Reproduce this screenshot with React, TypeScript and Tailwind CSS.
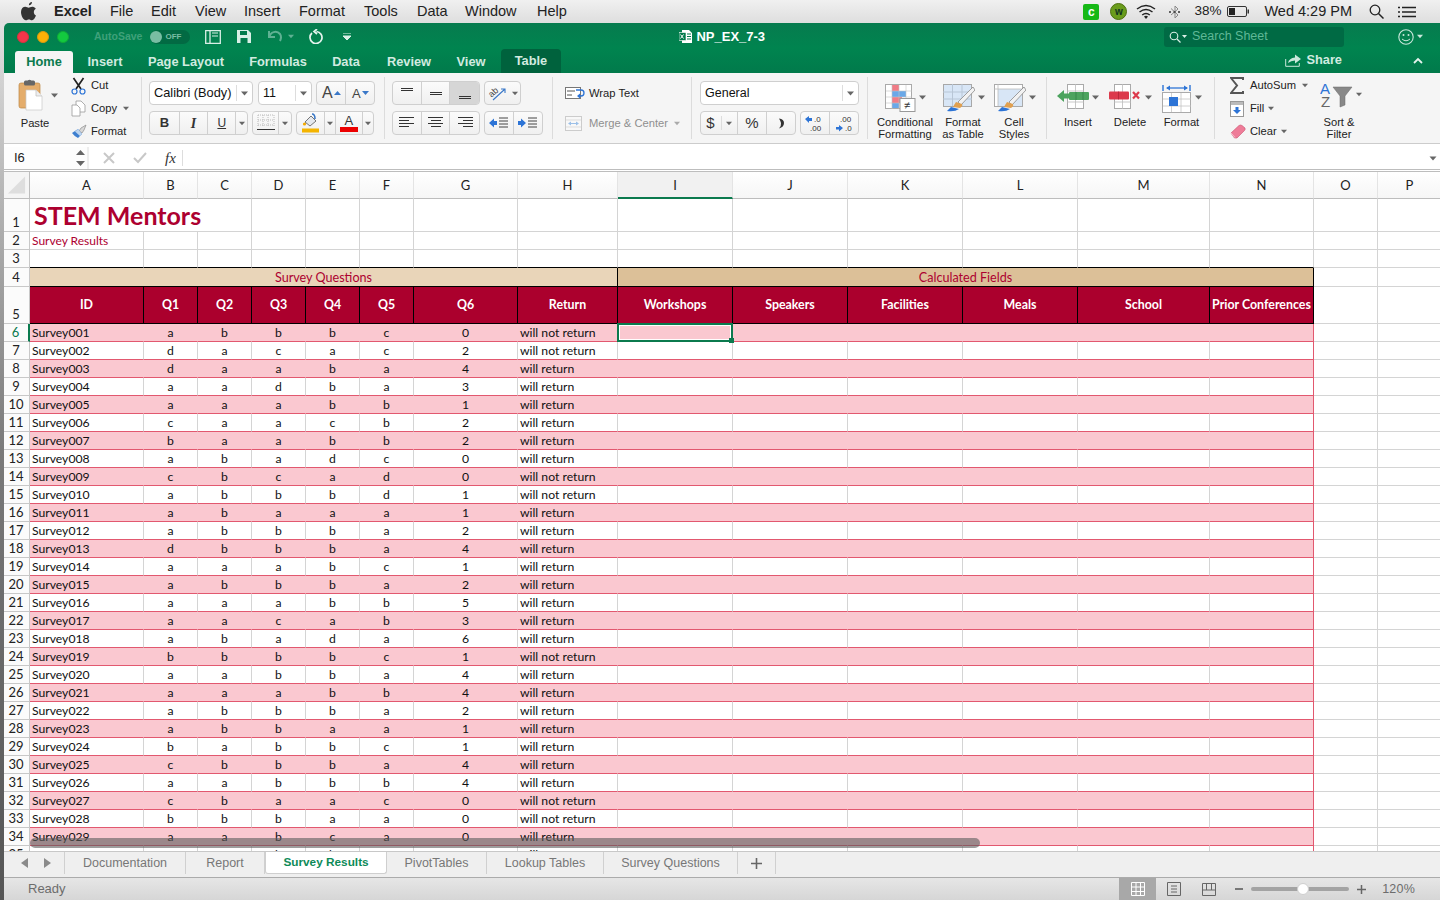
import React from "react";

const COLS =
  "grid grid-cols-[26px_114px_54px_54px_54px_54px_54px_104px_100px_115px_115px_115px_115px_132px_104px_64px_64px]";

const DATA = `001 a b b b c 0 n
002 d a c a c 2 n
003 d a a b a 4 r
004 a a d b a 3 r
005 a a a b b 1 r
006 c a a c b 2 r
007 b a a b b 2 r
008 a b a d c 0 r
009 c b c a d 0 n
010 a b b b d 1 n
011 a b a a a 1 r
012 a b b b a 2 r
013 d b b b a 4 r
014 a a a b c 1 r
015 a b b b a 2 r
016 a a a b b 5 r
017 a a c a b 3 r
018 a b a d a 6 r
019 b b b b c 1 n
020 a a b b a 4 r
021 a a a b b 4 r
022 a b b b a 2 r
023 a b b a a 1 r
024 b a b b c 1 r
025 c b b b a 4 r
026 a a b b b 4 r
027 c b a a c 0 n
028 b b b a a 0 n
029 a a b c a 0 r
030 a a b b a 0 r`
  .split("\n")
  .map((l) => l.split(" "));

const HEAD = ["A", "B", "C", "D", "E", "F", "G", "H", "I", "J", "K", "L", "M", "N", "O", "P"];
const FIELDS = ["ID", "Q1", "Q2", "Q3", "Q4", "Q5", "Q6", "Return", "Workshops", "Speakers", "Facilities", "Meals", "School", "Prior Conferences"];

const Caret = ({ c = "#666", w = 7 }: { c?: string; w?: number }) => (
  <svg width={w} height="5" viewBox="0 0 7 5" className="shrink-0">
    <path d="M0 0.5h7L3.5 4.5z" fill={c} />
  </svg>
);

const Sep = () => <div className="w-px h-[62px] mt-[4px] bg-[#dcdcdc] shrink-0" />;

const Lines = ({ ys, xs }: { ys: number[]; xs: [number, number][] }) => (
  <svg width="18" height="16" viewBox="0 0 18 16">
    {ys.map((y, i) => (
      <rect key={i} x={xs[i % xs.length][0]} y={y} width={xs[i % xs.length][1]} height="1" fill="#333" />
    ))}
  </svg>
);

const Cell = ({ w, active, children }: { w: number; active?: boolean; children?: React.ReactNode }) => (
  <div
    style={{ width: w }}
    className={`h-full flex items-center justify-center border-r border-[#d0d0d0] last:border-r-0 ${active ? "bg-[#d6d6d6]" : ""}`}
  >
    {children}
  </div>
);

const Box = ({ children, className = "" }: { children: React.ReactNode; className?: string }) => (
  <div className={`h-[24px] flex items-center border border-[#cfcfcf] rounded-[4px] bg-gradient-to-b from-[#fbfbfb] to-[#f0f0f0] overflow-hidden ${className}`}>
    {children}
  </div>
);

const GridIcon = ({ children, w = 34 }: { children: React.ReactNode; w?: number }) => (
  <svg width={w} height="30" viewBox={`0 0 ${w} 30`} className="shrink-0">
    {children}
  </svg>
);

const Brush = () => (
  <g>
    <path d="M31 4 L16 19 L19 22 L33 7 Z" fill="#f2f2f2" stroke="#8a8a8a" strokeWidth="0.8" />
    <path d="M14 19 q-2 3 -3 5 l7 1 q3 -2 2 -4z" fill="#e0a050" />
    <path d="M9 24 q-2 2 -4 4 q8 1 12 -2z" fill="#2d74d6" />
  </g>
);

const TableBg = () => (
  <g>
    <rect x="1.5" y="1.5" width="28" height="22" fill="#d8e6f6" stroke="#a8a8a8" />
    <path d="M1 9h29M1 16h29M10.5 1v22M20 1v22" stroke="#b8c6d6" strokeWidth="1" />
  </g>
);

const Big = ({ w, label, children }: { w: number; label: React.ReactNode; children: React.ReactNode }) => (
  <div style={{ width: w }} className="flex flex-col items-center shrink-0">
    <div className="h-[31px] flex items-center gap-[3px] mt-[9px]">
      {children}
      <Caret />
    </div>
    <div className="mt-[3px] text-[11.2px] leading-[12px] text-center text-[#222] whitespace-nowrap">{label}</div>
  </div>
);

const Ribbon = () => (
  <div className="h-[71px] shrink-0 flex bg-[#f5f5f5] border-b border-[#cccccc] text-[#222] text-[11.2px]">
    {/* Clipboard */}
    <div className="w-[137px] shrink-0 flex pl-[14px] relative">
      <div className="w-[42px] flex flex-col">
        <div className="flex items-center mt-[6px] h-[32px] gap-[6px]">
          <svg width="27" height="32" viewBox="0 0 27 32">
            <rect x="1" y="4" width="21" height="25" rx="2" fill="#e4ad6c" stroke="#bd8644" strokeWidth="0.7" />
            <rect x="6" y="1.5" width="11" height="5" rx="1.5" fill="#666" />
            <circle cx="11.5" cy="2.5" r="1.8" fill="#666" />
            <path d="M8 11h10l6 6v14H8z" fill="#fff" stroke="#c9c9c9" strokeWidth="0.7" />
            <path d="M18 11v6h6" fill="#eee" stroke="#bbb" strokeWidth="0.7" />
          </svg>
          <Caret />
        </div>
        <div className="w-[34px] text-center mt-[5px] leading-[14px]">Paste</div>
      </div>
      <div className="ml-[11px] flex flex-col pt-[1px]">
        <div className="h-[23px] flex items-center gap-[5px]">
          <svg width="15" height="18" viewBox="0 0 15 18">
            <path d="M2.5 1 L10 12 M12.5 1 L5 12" stroke="#222" strokeWidth="1.7" />
            <circle cx="3.5" cy="14.5" r="2.5" fill="none" stroke="#2d74d6" strokeWidth="1.2" />
            <circle cx="11.5" cy="14.5" r="2.5" fill="none" stroke="#2d74d6" strokeWidth="1.2" />
          </svg>
          <span>Cut</span>
        </div>
        <div className="h-[23px] flex items-center gap-[5px]">
          <svg width="15" height="17" viewBox="0 0 15 17">
            <path d="M5 1h5l4 4v7H5z" fill="#fff" stroke="#9a9a9a" strokeWidth="0.8" />
            <path d="M1 5h5l3 3v8H1z" fill="#fff" stroke="#9a9a9a" strokeWidth="0.8" />
          </svg>
          <span>Copy</span>
          <span className="ml-[1px]">
            <Caret w={6} />
          </span>
        </div>
        <div className="h-[23px] flex items-center gap-[4px]">
          <svg width="16" height="15" viewBox="0 0 16 15">
            <path d="M15 1 L10 4 L8 7 L11 9 L13 6Z" fill="#d8d8d8" stroke="#8c8c8c" strokeWidth="0.7" />
            <path d="M1 9 L7 5 L11 10 L7 14 Q3 12 1 9Z" fill="#3d7fd0" />
            <path d="M4 7.5 L7 5 L11 10 L9 12Z" fill="#bcd4ee" />
          </svg>
          <span>Format</span>
        </div>
      </div>
    </div>
    <Sep />
    {/* Font */}
    <div className="w-[242px] shrink-0 pl-[7px] pt-[8px] flex flex-col gap-[6px]">
      <div className="flex gap-[5px]">
        <div className="w-[104px] h-[24px] flex items-center justify-between border border-[#cfcfcf] rounded-[4px] bg-white text-[12.8px] pl-[4px] pr-[4px] text-[#111]">
          <span className="whitespace-nowrap">Calibri (Body)</span>
          <span className="flex items-center h-[16px] border-l border-[#ddd] pl-[4px]">
            <Caret />
          </span>
        </div>
        <div className="w-[54px] h-[24px] flex items-center justify-between border border-[#cfcfcf] rounded-[4px] bg-white text-[12.5px] pl-[4px] pr-[4px] text-[#111]">
          <span>11</span>
          <span className="flex items-center h-[16px] border-l border-[#ddd] pl-[4px]">
            <Caret />
          </span>
        </div>
        <Box className="w-[59px] ml-[-1px]">
          <Cell w={30}>
            <span className="text-[16px] text-[#444] leading-none">A</span>
            <svg width="7" height="4" viewBox="0 0 7 4" className="ml-px">
              <path d="M0 4L3.5 0L7 4z" fill="#3a78c8" />
            </svg>
          </Cell>
          <Cell w={28}>
            <span className="text-[13px] text-[#444] leading-none">A</span>
            <svg width="7" height="4" viewBox="0 0 7 4" className="ml-px">
              <path d="M0 0L3.5 4L7 0z" fill="#3a78c8" />
            </svg>
          </Cell>
        </Box>
      </div>
      <div className="flex gap-[4px]">
        <Box className="w-[99px]">
          <Cell w={30}>
            <b className="text-[13px] text-[#333] font-['Liberation_Sans']">B</b>
          </Cell>
          <Cell w={29}>
            <i className="text-[14px] text-[#333] font-['Liberation_Serif'] font-bold">I</i>
          </Cell>
          <Cell w={28}>
            <span className="text-[12px] text-[#333] underline">U</span>
          </Cell>
          <Cell w={11}>
            <Caret w={6} />
          </Cell>
        </Box>
        <Box className="w-[40px]">
          <Cell w={27}>
            <svg width="18" height="18" viewBox="0 0 18 18">
              <path d="M1 1h16M1 6h16M1 11h16M1 1v11M6 1v11M11 1v11M17 1v11" stroke="#bbb" strokeDasharray="1 1" />
              <rect x="0" y="15" width="18" height="1" fill="#333" />
            </svg>
          </Cell>
          <Cell w={12}>
            <Caret w={6} />
          </Cell>
        </Box>
        <Box className="w-[78px]">
          <Cell w={28}>
            <svg width="19" height="20" viewBox="0 0 19 20">
              <path d="M4 9 L10 3 L15 8 L9 13Z" fill="#e4e8ee" stroke="#555" strokeWidth="0.8" />
              <path d="M11 1 q3 0 3 5" fill="none" stroke="#3a78c8" strokeWidth="1.6" />
              <circle cx="3.5" cy="11" r="1.6" fill="#f0a800" />
              <rect x="1" y="15.5" width="17" height="4" fill="#f4b400" />
            </svg>
          </Cell>
          <Cell w={11}>
            <Caret w={6} />
          </Cell>
          <Cell w={28}>
            <div className="flex flex-col items-center">
              <span className="text-[13px] leading-[13px] text-[#333]">A</span>
              <span className="block w-[18px] h-[5px] bg-[#ec0000]" />
            </div>
          </Cell>
          <Cell w={10}>
            <Caret w={6} />
          </Cell>
        </Box>
      </div>
    </div>
    <Sep />
    {/* Alignment */}
    <div className="w-[167px] shrink-0 pl-[7px] pt-[8px] flex flex-col gap-[6px]">
      <div className="flex gap-[4px]">
        <Box className="w-[88px]">
          <Cell w={29}>
            <Lines ys={[3, 5]} xs={[[3, 12]]} />
          </Cell>
          <Cell w={29}>
            <Lines ys={[7, 9]} xs={[[3, 12]]} />
          </Cell>
          <Cell w={29} active>
            <Lines ys={[11, 13]} xs={[[3, 12]]} />
          </Cell>
        </Box>
        <Box className="w-[37px] justify-center gap-[4px]">
          <svg width="20" height="18" viewBox="0 0 20 18">
            <text x="1" y="11" fontSize="9" fontFamily="Liberation Sans" fill="#444" transform="rotate(-42 6 9)">
              ab
            </text>
            <path d="M5 16 L17 5 M13 5h4v4" stroke="#3a78c8" strokeWidth="1.1" fill="none" />
          </svg>
          <Caret w={6} />
        </Box>
      </div>
      <div className="flex gap-[4px]">
        <Box className="w-[88px]">
          <Cell w={29}>
            <Lines ys={[2, 5, 8, 11]} xs={[[1, 15], [1, 10]]} />
          </Cell>
          <Cell w={29}>
            <Lines ys={[2, 5, 8, 11]} xs={[[1, 15], [4, 10]]} />
          </Cell>
          <Cell w={29}>
            <Lines ys={[2, 5, 8, 11]} xs={[[2, 15], [7, 10]]} />
          </Cell>
        </Box>
        <Box className="w-[59px]">
          <Cell w={29}>
            <svg width="20" height="12" viewBox="0 0 20 12">
              <path d="M0 6 L5 1.5 V4 H8 V8 H5 V10.5Z" fill="#2d74d6" />
              <path d="M10 1h9M10 4h9M10 7h9M10 10h9" stroke="#444" />
            </svg>
          </Cell>
          <Cell w={29}>
            <svg width="20" height="12" viewBox="0 0 20 12">
              <path d="M8 6 L3 1.5 V4 H0 V8 H3 V10.5Z" fill="#2d74d6" />
              <path d="M10 1h9M10 4h9M10 7h9M10 10h9" stroke="#444" />
            </svg>
          </Cell>
        </Box>
      </div>
    </div>
    <Sep />
    {/* Wrap */}
    <div className="w-[138px] shrink-0 pl-[12px] pt-[8px] flex flex-col gap-[6px]">
      <div className="h-[24px] flex items-center gap-[4px]">
        <svg width="20" height="14" viewBox="0 0 20 14">
          <rect x="0.5" y="1.5" width="15" height="11" fill="#fff" stroke="#777" />
          <path d="M2 5h8M2 9h5" stroke="#555" />
          <path d="M11 4h5q3 0 3 3t-3 3h-2" stroke="#2d74d6" strokeWidth="1.3" fill="none" />
          <path d="M15 7.5v5l-3-2.5z" fill="#2d74d6" />
        </svg>
        <span>Wrap Text</span>
      </div>
      <div className="h-[24px] flex items-center gap-[6px] text-[#8f8f8f]">
        <svg width="18" height="15" viewBox="0 0 18 15">
          <rect x="0.5" y="0.5" width="16" height="14" fill="#f8f8f8" stroke="#ccc" />
          <path d="M5 7.5h7" stroke="#9cc0e8" />
          <path d="M3 7.5l3-2v4zM14 7.5l-3-2v4z" fill="#9cc0e8" />
          <path d="M1 4h15M1 11h15" stroke="#ddd" />
        </svg>
        <span>Merge &amp; Center</span>
        <Caret c="#aaa" w={6} />
      </div>
    </div>
    <Sep />
    {/* Number */}
    <div className="w-[175px] shrink-0 pl-[8px] pt-[8px] flex flex-col gap-[6px]">
      <div className="w-[159px] h-[24px] flex items-center justify-between border border-[#cfcfcf] rounded-[4px] bg-white text-[12.5px] px-[4px] text-[#111]">
        <span>General</span>
        <span className="flex items-center h-[16px] border-l border-[#ddd] pl-[4px]">
          <Caret />
        </span>
      </div>
      <div className="flex gap-[4px]">
        <Box className="w-[96px]">
          <Cell w={37}>
            <span className="text-[15px] text-[#333]">$</span>
            <span className="ml-[6px] pl-[4px] h-[14px] flex items-center border-l border-[#ddd]">
              <Caret w={6} />
            </span>
          </Cell>
          <Cell w={29}>
            <span className="text-[15px] text-[#333]">%</span>
          </Cell>
          <Cell w={28}>
            <svg width="7" height="11" viewBox="0 0 7 11">
              <path d="M1 0.500Q6 1 6 5Q6 9 1 10.500Q3.500 7.500 3 5Q2.500 3 1 0.500Z" fill="#333" />
            </svg>
          </Cell>
        </Box>
        <Box className="w-[59px]">
          <Cell w={29}>
            <svg width="20" height="17" viewBox="0 0 20 17">
              <path d="M0 4 L4 1 V3 H7 V6 H4 V8Z" fill="#2d74d6" />
              <text x="9" y="7" fontSize="8" fontFamily="Liberation Sans" fill="#333">.0</text>
              <text x="5" y="15.5" fontSize="8" fontFamily="Liberation Sans" fill="#333">.00</text>
            </svg>
          </Cell>
          <Cell w={29}>
            <svg width="20" height="17" viewBox="0 0 20 17">
              <text x="6" y="7" fontSize="8" fontFamily="Liberation Sans" fill="#333">.00</text>
              <path d="M7 13 L3 10 V12 H0 V14.5 H3 V16.5Z" transform="translate(2 0) scale(1 1)" fill="#2d74d6" />
              <text x="11" y="15.5" fontSize="8" fontFamily="Liberation Sans" fill="#333">.0</text>
            </svg>
          </Cell>
        </Box>
      </div>
    </div>
    <Sep />
    {/* Styles */}
    <div className="w-[178px] shrink-0 pl-[8px] flex">
      <Big w={58} label={<>Conditional<br />Formatting</>}>
        <GridIcon w={31}>
          <rect x="0.5" y="1.5" width="26" height="24" fill="#fff" stroke="#aaa" />
          <rect x="7" y="2" width="7" height="6" fill="#f07c86" />
          <rect x="7" y="8" width="14" height="6" fill="#6aa8e8" />
          <rect x="7" y="14" width="10" height="6" fill="#f07c86" />
          <rect x="7" y="20" width="7" height="5" fill="#6aa8e8" />
          <path d="M1 8h26M1 14h26M1 20h26M7 2v24M14 2v24M21 2v24" stroke="#c4c4c4" strokeWidth="0.6" />
          <rect x="15" y="15.5" width="15" height="13" fill="#fff" stroke="#999" />
          <text x="19" y="26" fontSize="11" fontFamily="Liberation Sans" fill="#333">≠</text>
        </GridIcon>
      </Big>
      <div className="w-[4px]" />
      <Big w={50} label={<>Format<br />as Table</>}>
        <GridIcon w={33}>
          <TableBg />
          <Brush />
        </GridIcon>
      </Big>
      <div className="w-[2px]" />
      <Big w={48} label={<>Cell<br />Styles</>}>
        <GridIcon w={33}>
          <rect x="1.5" y="1.5" width="28" height="22" fill="#fff" stroke="#aaa" />
          <rect x="5" y="6" width="24" height="17" fill="#d8e6f6" />
          <path d="M1 6h29M5 1v22" stroke="#bbb" strokeWidth="0.8" />
          <Brush />
        </GridIcon>
      </Big>
    </div>
    <Sep />
    {/* Cells */}
    <div className="w-[167px] shrink-0 pl-[5px] flex">
      <Big w={52} label="Insert">
        <GridIcon w={32}>
          <rect x="10.5" y="1.5" width="16" height="24" fill="#fff" stroke="#aaa" />
          <path d="M10 8h17M10 19h17M18.5 1v25" stroke="#bbb" strokeWidth="0.8" />
          <rect x="12" y="9" width="20" height="8" rx="1" fill="#4ca35e" />
          <path d="M19 9v8M26 9v8" stroke="#2f7d43" strokeWidth="0.7" />
          <path d="M0 13 L7 7 V19Z" fill="#4ca35e" />
          <rect x="6" y="10.5" width="6" height="5" fill="#4ca35e" />
        </GridIcon>
      </Big>
      <Big w={52} label="Delete">
        <GridIcon w={33}>
          <rect x="5.5" y="1.5" width="16" height="24" fill="#fff" stroke="#aaa" />
          <path d="M5 19h17M13.5 1v25" stroke="#bbb" strokeWidth="0.8" />
          <rect x="0" y="8.5" width="20" height="8" rx="1" fill="#dc3a4c" />
          <path d="M9.5 8.5v8" stroke="#a82233" strokeWidth="0.7" />
          <path d="M24 9l6 6.5M30 9l-6 6.5" stroke="#dc3a4c" strokeWidth="2.2" />
        </GridIcon>
      </Big>
      <Big w={51} label="Format">
        <GridIcon w={30}>
          <path d="M1 2v6M28 2v6" stroke="#2d74d6" strokeWidth="1.4" />
          <path d="M5 5h20" stroke="#2d74d6" strokeWidth="1.3" />
          <path d="M4 5l4-2.500v5zM26 5l-4-2.500v5z" fill="#2d74d6" />
          <rect x="0.5" y="9.5" width="28" height="20" fill="#fff" stroke="#aaa" />
          <path d="M1 16h28M1 23h28M9.500 10v19M19 10v19" stroke="#c4c4c4" strokeWidth="0.8" />
          <rect x="7" y="14" width="9" height="9" fill="#2d74d6" />
        </GridIcon>
      </Big>
    </div>
    <Sep />
    {/* Editing */}
    <div className="flex-1 flex pl-[15px]">
      <div className="flex flex-col pt-[1px] w-[85px]">
        <div className="h-[23px] flex items-center gap-[6px]">
          <svg width="14" height="17" viewBox="0 0 14 17">
            <path d="M13 3V1H1L7 8.5L1 16H13V14" fill="none" stroke="#555" strokeWidth="2" />
          </svg>
          <span>AutoSum</span>
          <Caret w={6} />
        </div>
        <div className="h-[23px] flex items-center gap-[6px]">
          <svg width="14" height="16" viewBox="0 0 14 16">
            <rect x="0.5" y="0.5" width="13" height="15" fill="#fff" stroke="#999" />
            <rect x="1" y="1" width="12" height="3" fill="#bbb" />
            <path d="M7 13 L3 9 H5.5 V6 H8.5 V9 H11Z" fill="#2d74d6" />
          </svg>
          <span>Fill</span>
          <span className="-ml-[2px]">
            <Caret w={6} />
          </span>
        </div>
        <div className="h-[23px] flex items-center gap-[4px]">
          <svg width="16" height="15" viewBox="0 0 16 15">
            <path d="M1 9 L9 1.5 Q10.5 0.5 12 1.5 L15 4 Q15.5 5.5 14.5 6.5 L7 14 H4.5 Z" fill="#ee7c98" stroke="#c9506e" strokeWidth="0.6" />
            <path d="M1 9 L5 13.5" stroke="#f8c4d0" />
          </svg>
          <span>Clear</span>
          <Caret w={6} />
        </div>
      </div>
      <div className="w-[64px] -ml-[8px] flex flex-col items-center">
        <div className="h-[31px] flex items-center gap-[3px] mt-[6px] ml-[4px]">
          <svg width="33" height="28" viewBox="0 0 33 28">
            <text x="0" y="13" fontSize="15" fontFamily="Liberation Sans" fill="#2d74d6">A</text>
            <text x="1" y="26" fontSize="15" fontFamily="Liberation Sans" fill="#666">Z</text>
            <path d="M13 6h19L25 15v9l-5 2V15z" fill="#888" stroke="#6a6a6a" strokeWidth="0.5" />
          </svg>
          <Caret w={6} />
        </div>
        <div className="mt-[6px] leading-[12px] text-center whitespace-nowrap">
          Sort &amp;
          <br />
          Filter
        </div>
      </div>
    </div>
  </div>
);

const FormulaBar = () => (
  <div className="h-[28px] shrink-0 flex items-center bg-white border-b-[3px] border-double border-[#bdbdbd] pt-[3px]">
    <div className="w-[85px] flex items-center justify-between pl-[10px] pr-[2px] h-full bg-[#fdfdfd] border-r-2 border-[#eeeeee]">
      <span className="text-[13px] text-[#222]">I6</span>
      <svg width="9" height="18" viewBox="0 0 9 18">
        <path d="M0 6L4.500 1L9 6zM0 12L4.500 17L9 12z" fill="#666" />
      </svg>
    </div>
    <div className="flex items-center h-full">
      <span className="ml-[14px] w-[30px] text-[#c4c4c4]">
        <svg width="12" height="12" viewBox="0 0 12 12">
          <path d="M1 1l10 10M11 1L1 11" stroke="#c8c8c8" strokeWidth="2" />
        </svg>
      </span>
      <span className="w-[24px]">
        <svg width="14" height="12" viewBox="0 0 14 12">
          <path d="M1 6l4 4 8-9" stroke="#c8c8c8" strokeWidth="2" fill="none" />
        </svg>
      </span>
      <span className="ml-[8px] w-[17px] text-[15px] italic font-['Liberation_Serif'] text-[#333]">fx</span>
      <span className="block w-px h-[16px] bg-[#dddddd]" />
    </div>
    <div className="flex-1" />
    <span className="mr-[3px]">
      <Caret w={8} />
    </span>
  </div>
);

const RH = ({ n, on }: { n: number | string; on?: boolean }) => (
  <div className={`flex items-end justify-center leading-[17px] bg-[#fbfbfb] text-[13px] pr-[1px] border-b border-[#c8c8c8] ${on ? "border-r-2 border-r-[#0b7a4e] text-[#0b7a4e]" : "border-r border-r-[#c8c8c8] text-[#222]"}`}>
    {n}
  </div>
);

const G = "border-r border-b border-[#d4d4d4]";

const Grid = () => (
  <div className="flex-1 min-h-0 overflow-hidden relative bg-white font-['Lato',sans-serif] text-[12.2px] text-[#111]">
    {/* column heads */}
    <div className={`${COLS} h-[27px]`}>
      <div className="bg-[#f5f5f5] border-r border-b border-[#bdbdbd] flex items-end p-[3px]">
        <svg width="20" height="20" viewBox="0 0 20 20">
          <path d="M19 1V19H1z" fill="#dedede" />
        </svg>
      </div>
      {HEAD.map((c) => (
        <div
          key={c}
          className={`flex items-center justify-center pt-[2px] text-[13px] text-[#222] border-r ${c === "I" ? "bg-[#f1f1f1] border-b-2 border-b-[#0b7a4e] border-r-[#e4e4e4]" : "bg-gradient-to-b from-[#ffffff] to-[#f6f6f6] border-b border-b-[#bdbdbd] border-r-[#e4e4e4]"}`}
        >
          {c}
        </div>
      ))}
    </div>
    {/* row 1 */}
    <div className={`${COLS} h-[33px]`}>
      <RH n={1} />
      <div className={`${G} col-span-3 flex items-center pl-[4px] pt-[1px] font-bold text-[25px] leading-none text-[#ad0030] whitespace-nowrap`}>STEM Mentors</div>
      {HEAD.slice(3).map((c) => (
        <div key={c} className={G} />
      ))}
    </div>
    {/* row 2 */}
    <div className={`${COLS} h-[18px]`}>
      <RH n={2} />
      <div className={`${G} h-[18px] pl-[2px] leading-[18px] text-[12px] text-[#ad0030] whitespace-nowrap`}>Survey Results</div>
      {HEAD.slice(1).map((c) => (
        <div key={c} className={G} />
      ))}
    </div>
    {/* row 3 */}
    <div className={`${COLS} h-[18px]`}>
      <RH n={3} />
      {HEAD.map((c, i) => (
        <div key={c} className={i < 14 ? "border-r border-b border-r-[#d4d4d4] border-b-black" : G} />
      ))}
    </div>
    {/* row 4 */}
    <div className={`${COLS} h-[19px]`}>
      <RH n={4} />
      <div className="col-span-8 h-[19px] bg-[#e9d5b9] border-r border-b border-black flex items-center justify-center pt-[2px] text-[#ad0030] text-[12.6px]">Survey Questions</div>
      <div className="col-span-6 h-[19px] bg-[#dcc098] border-r border-b border-black flex items-center justify-center pt-[2px] text-[#ad0030] text-[12.6px]">Calculated Fields</div>
      <div className={G} />
      <div className={G} />
    </div>
    {/* row 5 */}
    <div className={`${COLS} h-[37px]`}>
      <RH n={5} />
      {FIELDS.map((f) => (
        <div key={f} className="bg-[#ab002d] text-white font-bold text-[12.4px] pt-[1px] border-r border-b border-black flex items-center justify-center whitespace-nowrap">
          {f}
        </div>
      ))}
      <div className={G} />
      <div className={G} />
    </div>
    {/* data */}
    {DATA.map((r, i) => {
      const odd = i % 2 === 0;
      const rowN = i + 6;
      const v = odd ? "border-r-transparent" : "border-r-[#d4d4d4]";
      const base = `h-[18px] border-r border-b border-b-[#e2586f] ${v} leading-[18px] ${odd ? "bg-[#fac8d0]" : "bg-white"}`;
      return (
        <div key={r[0]} className={`${COLS} h-[18px]`}>
          <RH n={rowN} on={rowN === 6} />
          <div className={`${base} pl-[2px]`}>{`Survey${r[0]}`}</div>
          {r.slice(1, 7).map((c, j) => (
            <div key={j} className={`${base} text-center`}>
              {c}
            </div>
          ))}
          <div className={`${base} pl-[2px] whitespace-nowrap`}>{r[7] === "n" ? "will not return" : "will return"}</div>
          {[0, 1, 2, 3, 4, 5].map((j) => (
            <div
              key={j}
              className={`relative h-[18px] border-b border-b-[#e2586f] ${odd ? "bg-[#fac8d0]" : "bg-white"} border-r ${j === 5 ? "border-r-[#e2586f]" : v}`}
            >
              {rowN === 6 && j === 0 && (
                <div className="absolute -left-px -top-px -right-px -bottom-px border-2 border-[#0b7a4e] z-10">
                  <div className="absolute inset-0 border border-white" />
                  <div className="absolute -right-[3px] -bottom-[3px] w-[5px] h-[5px] bg-[#0b7a4e]" />
                </div>
              )}
            </div>
          ))}
          <div className={G} />
          <div className={G} />
        </div>
      );
    })}
    {/* overlay scrollbar */}
    <div className="absolute left-[26px] bottom-[3px] w-[950px] h-[10px] rounded-full bg-[#5c5c5c]/60 z-20" />
  </div>
);

const Tab = ({ w, children, active }: { w: number; children: React.ReactNode; active?: boolean }) => (
  <div
    style={{ width: w }}
    className={
      active
        ? "h-[22px] flex items-center justify-center bg-white text-[#0d8a58] font-bold text-[11.8px] rounded-b-[3px] border-x border-b border-[#cfcfcf] shrink-0"
        : "h-[22px] flex items-center justify-center text-[#777] border-r border-[#d0d0d0] shrink-0"
    }
  >
    {children}
  </div>
);

const Tabs = () => (
  <div className="h-[27px] shrink-0 bg-[#efefef] border-t border-[#c8c8c8] border-b border-b-[#ababab] flex text-[12.5px]">
    <div className="w-[61px] h-[22px] flex items-center justify-center gap-[14px] border-r border-[#d0d0d0] shrink-0 pl-[3px]">
      <svg width="8" height="10" viewBox="0 0 8 10">
        <path d="M7 0V10L0 5z" fill="#8a8a8a" />
      </svg>
      <svg width="8" height="10" viewBox="0 0 8 10">
        <path d="M1 0V10L8 5z" fill="#8a8a8a" />
      </svg>
    </div>
    <Tab w={121}>Documentation</Tab>
    <Tab w={79}>Report</Tab>
    <Tab w={122} active>Survey Results</Tab>
    <Tab w={100}>PivotTables</Tab>
    <Tab w={117}>Lookup Tables</Tab>
    <Tab w={134}>Survey Questions</Tab>
    <Tab w={38}>
      <svg width="11" height="11" viewBox="0 0 11 11">
        <path d="M5.500 0v11M0 5.500h11" stroke="#666" strokeWidth="1.6" />
      </svg>
    </Tab>
  </div>
);

const Status = () => (
  <div className="h-[22px] shrink-0 flex items-center bg-gradient-to-b from-[#e6e6e6] to-[#d6d6d6] text-[#6c6c6c] text-[13px]">
    <span className="ml-[24px] flex-1">Ready</span>
    <div className="w-[37px] h-full bg-[#a8a8a8] flex items-center justify-center">
      <svg width="14" height="14" viewBox="0 0 14 14">
        <path d="M.5.500h13v13H.500zM.5 5h13M.5 9.500h13M5 .5v13M9.500 .5v13" stroke="#fff" fill="none" />
      </svg>
    </div>
    <div className="w-[35px] flex justify-center">
      <svg width="14" height="14" viewBox="0 0 14 14">
        <path d="M.5.500h13v13H.500z" stroke="#666" fill="none" />
        <path d="M4 4h6M4 7h6M4 10h6" stroke="#666" />
      </svg>
    </div>
    <div className="w-[36px] flex justify-center">
      <svg width="14" height="13" viewBox="0 0 14 13">
        <path d="M.5.500h13v12H.500zM.5 7h13M4.500.5V7M9.500 .5V7" stroke="#666" fill="none" />
      </svg>
    </div>
    <div className="w-[8px] h-[2px] bg-[#777] ml-[8px]" />
    <div className="w-[98px] h-[4px] ml-[8px] rounded-full bg-[#a3a3a3] relative">
      <div className="absolute left-[46px] -top-[4px] w-[12px] h-[12px] rounded-full bg-white border border-[#cfcfcf]" />
    </div>
    <svg width="9" height="9" viewBox="0 0 9 9" className="ml-[8px]">
      <path d="M4.500 0v9M0 4.500h9" stroke="#666" strokeWidth="1.500" />
    </svg>
    <span className="ml-[16px] mr-[25px] whitespace-nowrap text-[12.5px] tracking-[0.2px]">120%</span>
  </div>
);

const MenuBar = () => (
  <div className="h-[23px] shrink-0 flex items-center bg-gradient-to-b from-[#f0f0f0] to-[#dedede] text-[14.5px] text-[#222]">
    <svg width="17" height="19" viewBox="0 0 17 19" className="ml-[20px] mr-[17px]">
      <path d="M12 0c.1 1.500-1.300 3.400-3.100 3.300C8.700 1.700 10.300.1 12 0zM16 13.500c-.8 2-2.300 4.800-4 4.800-1.200 0-1.700-.8-3.100-.8s-2 .8-3.100.8C3.700 18.300 1 14 1 10c0-3.300 2.100-5.200 4.300-5.200 1.300 0 2.400.9 3.300.9s2.100-1 3.600-1c1 0 2.700.5 3.600 2-2.800 1.700-2.400 5.600.2 6.800z" fill="#333" />
    </svg>
    <b className="w-[56px]">Excel</b>
    <span className="w-[41px]">File</span>
    <span className="w-[44px]">Edit</span>
    <span className="w-[49px]">View</span>
    <span className="w-[55px]">Insert</span>
    <span className="w-[65px]">Format</span>
    <span className="w-[53px]">Tools</span>
    <span className="w-[48px]">Data</span>
    <span className="w-[72px]">Window</span>
    <span>Help</span>
    <div className="flex-1" />
    <div className="w-[16px] h-[16px] rounded-[2px] bg-[#16b816] flex items-center justify-center text-white text-[12px] font-bold leading-none">c</div>
    <div className="ml-[11px] w-[17px] h-[17px] rounded-full bg-[#6a9c1c] border border-[#4d7010] flex items-center justify-center text-[10px] font-bold leading-none text-[#132]">w</div>
    <svg width="20" height="15" viewBox="0 0 20 15" className="ml-[9px]">
      <path d="M1 5q9-7 18 0M3.500 8q6.500-5 13 0M6.200 11q3.800-3 7.600 0" stroke="#222" strokeWidth="1.500" fill="none" />
      <path d="M10 15l-2-2.500q2-1.500 4 0z" fill="#222" />
    </svg>
    <svg width="14" height="16" viewBox="0 0 14 16" className="ml-[12px]">
      <path d="M3 4.500l7 6.500-3 3V2l3 3-7 6" stroke="#888" fill="none" />
      <path d="M1 8h2M5.500 8h2M10 8h2" stroke="#333" strokeWidth="1.500" />
    </svg>
    <span className="ml-[12px] text-[13.5px]">38%</span>
    <svg width="23" height="11" viewBox="0 0 23 11" className="ml-[6px]">
      <rect x="0.500" y="0.500" width="19" height="10" rx="1.500" fill="none" stroke="#333" />
      <rect x="2" y="2" width="6" height="7" fill="#222" />
      <rect x="20.500" y="3.500" width="1.500" height="4" fill="#333" />
    </svg>
    <span className="ml-[14px] text-[14.5px]">Wed 4:29 PM</span>
    <svg width="15" height="15" viewBox="0 0 15 15" className="ml-[17px]">
      <circle cx="6" cy="6" r="4.800" stroke="#222" strokeWidth="1.300" fill="none" />
      <path d="M9.500 9.500l5 5" stroke="#222" strokeWidth="1.500" />
    </svg>
    <svg width="18" height="12" viewBox="0 0 18 12" className="ml-[14px] mr-[24px]">
      <path d="M0 1.500h2M4 1.500h14M0 6h2M4 6h14M0 10.500h2M4 10.500h14" stroke="#222" strokeWidth="1.700" />
    </svg>
  </div>
);

const TitleBar = () => (
  <div className="h-[50px] shrink-0 flex flex-col bg-gradient-to-b from-[#067b4e] via-[#00844f] to-[#017a4b] rounded-tl-[5px] text-white">
    <div className="h-[27px] shrink-0 flex items-center relative">
      <span className="ml-[13px] w-[12px] h-[12px] rounded-full bg-[#f5364a] border border-[#d8303f]" />
      <span className="ml-[8px] w-[12px] h-[12px] rounded-full bg-[#fbb106] border border-[#d99a10]" />
      <span className="ml-[8px] w-[12px] h-[12px] rounded-full bg-[#13c93f] border border-[#10aa38]" />
      <span className="ml-[25px] text-[10.5px] font-bold text-[#3fa17a]">AutoSave</span>
      <div className="ml-[8px] w-[40px] h-[14px] rounded-full bg-[#026a43] flex items-center">
        <span className="w-[12px] h-[12px] rounded-full bg-[#79bda3]" />
        <span className="ml-[3px] text-[8px] font-bold text-[#79bda3]">OFF</span>
      </div>
      <svg width="16" height="14" viewBox="0 0 16 14" className="ml-[15px]">
        <path d="M.7.700h14.600v12.600H.700zM5 .7v12.600" stroke="#d9efe6" strokeWidth="1.300" fill="none" />
        <path d="M7 3h6M7 6h6" stroke="#d9efe6" />
      </svg>
      <svg width="14" height="15" viewBox="0 0 14 15" className="ml-[16px]">
        <path d="M0 1h11l3 3v10H0z" fill="#d9efe6" />
        <rect x="3" y="2" width="7" height="4" fill="#017a4b" />
        <rect x="3.500" y="9" width="7" height="5" fill="#017a4b" />
      </svg>
      <svg width="16" height="13" viewBox="0 0 16 13" className="ml-[16px]">
        <path d="M2 1v6h6M2.500 7A6 6 0 0 1 13 4q2 3 0 7" stroke="#5fb193" strokeWidth="2" fill="none" />
      </svg>
      <span className="ml-[5px]">
        <Caret c="#5fb193" w={6} />
      </span>
      <svg width="14" height="15" viewBox="0 0 14 15" className="ml-[15px]">
        <path d="M3 4a6 6 0 1 0 4.500-1.500M8 0L5 2.500 8 5" stroke="#e4f3ed" strokeWidth="1.700" fill="none" />
      </svg>
      <svg width="8" height="8" viewBox="0 0 8 8" className="ml-[20px]">
        <path d="M0 0h8M0 3h8l-4 4z" stroke="#d9efe6" fill="#d9efe6" />
      </svg>
      <div className="flex-1 flex items-center">
        <svg width="13" height="15" viewBox="0 0 13 15" className="ml-[328px]">
          <path d="M3 1h7l3 3v10H3z" fill="#fff" />
          <path d="M8 5h4M8 7.500h4M8 10h4" stroke="#017a4b" />
          <rect x="0" y="3.500" width="7" height="8" fill="#017a4b" stroke="#fff" strokeWidth="0.600" />
          <path d="M1.500 5.500l3 4M4.500 5.500l-3 4" stroke="#fff" />
        </svg>
        <span className="ml-[4px] text-[13px] font-bold">NP_EX_7-3</span>
      </div>
      <div className="w-[180px] h-[20px] rounded-[3px] bg-[#006a44] flex items-center pl-[5px] text-[12.5px] text-[#5fb896] mr-[54px]">
        <svg width="12" height="12" viewBox="0 0 12 12">
          <circle cx="5" cy="5" r="3.800" stroke="#d9efe6" fill="none" strokeWidth="1.100" />
          <path d="M8 8l3.500 3.500" stroke="#d9efe6" strokeWidth="1.200" />
        </svg>
        <span className="ml-px">
          <Caret c="#d9efe6" w={5} />
        </span>
        <span className="ml-[5px]">Search Sheet</span>
      </div>
      <svg width="16" height="16" viewBox="0 0 16 16" className="mr-[3px]">
        <circle cx="8" cy="8" r="7.200" stroke="#cbe8dc" fill="none" strokeWidth="1.100" />
        <circle cx="5.500" cy="6" r="1" fill="#cbe8dc" />
        <circle cx="10.500" cy="6" r="1" fill="#cbe8dc" />
        <path d="M4 10q4 3.500 8 0" stroke="#cbe8dc" fill="none" />
      </svg>
      <span className="mr-[17px]">
        <Caret c="#cbe8dc" w={6} />
      </span>
    </div>
    <div className="h-[23px] shrink-0 flex items-end text-[12.8px] font-bold text-[#d2ebe0]">
      <div className="ml-[11px] w-[58px] h-[22px] bg-[#f5f5f5] rounded-t-[3px] text-[#0b7a4e] flex items-center justify-center">Home</div>
      <div className="w-[64px] h-[22px] flex items-center justify-center">Insert</div>
      <div className="w-[98px] h-[22px] flex items-center justify-center">Page Layout</div>
      <div className="w-[86px] h-[22px] flex items-center justify-center">Formulas</div>
      <div className="w-[50px] h-[22px] flex items-center justify-center">Data</div>
      <div className="w-[76px] h-[22px] flex items-center justify-center">Review</div>
      <div className="w-[48px] h-[22px] flex items-center justify-center">View</div>
      <div className="ml-[6px] w-[60px] h-[24px] bg-[#00623d] rounded-t-[4px] flex items-center justify-center">Table</div>
      <div className="flex-1" />
      <div className="h-[22px] flex items-center gap-[5px] mb-[2px]">
        <svg width="16" height="14" viewBox="0 0 16 14">
          <path d="M.7 6v7.300h13.600V10" stroke="#cbe8dc" fill="none" />
          <path d="M3 10q1-5 7-5.500V1.500L16 6l-6 4.500V7.500q-4 0-7 2.500z" fill="#cbe8dc" />
        </svg>
        <span>Share</span>
      </div>
      <svg width="10" height="7" viewBox="0 0 10 7" className="ml-[71px] mr-[17px] mb-[9px]">
        <path d="M1 6l4-4 4 4" stroke="#e4f3ed" strokeWidth="1.800" fill="none" />
      </svg>
    </div>
  </div>
);

export default function App() {
  return (
    <div className="w-[1440px] h-[900px] overflow-hidden flex flex-col bg-gradient-to-b from-[#e6e6e6] via-[#7a7a7a] to-[#555555] font-['Liberation_Sans',Arial,sans-serif]">
      <MenuBar />
      <div className="ml-[4px] flex-1 min-h-0 flex flex-col">
        <TitleBar />
        <Ribbon />
        <FormulaBar />
        <Grid />
        <Tabs />
        <Status />
      </div>
    </div>
  );
}
